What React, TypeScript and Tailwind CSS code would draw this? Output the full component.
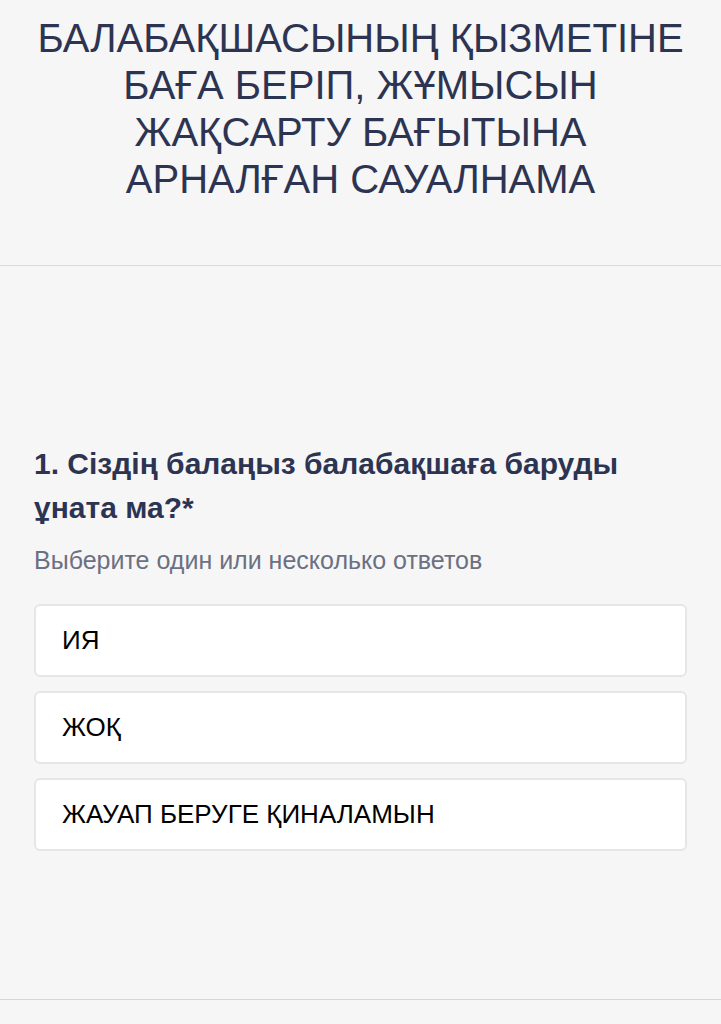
import React from 'react'

const options = ['ИЯ', 'ЖОҚ', 'ЖАУАП БЕРУГЕ ҚИНАЛАМЫН']

export default function App() {
  return (
    <div
      className="min-h-[1024px] w-full bg-[#f6f6f6] text-[#2d3452]"
      style={{ fontFamily: '"Liberation Sans", Arial, sans-serif' }}
    >
      {/* title */}
      <header className="h-[266px] border-b border-[#dadada] px-6 pt-[15px]">
        <h1 className="text-center text-[40px] leading-[47px] font-normal">
          БАЛАБАҚШАСЫНЫҢ ҚЫЗМЕТІНЕ
          <br />
          БАҒА БЕРІП, ЖҰМЫСЫН
          <br />
          ЖАҚСАРТУ БАҒЫТЫНА
          <br />
          АРНАЛҒАН САУАЛНАМА
        </h1>
      </header>

      {/* question */}
      <section className="h-[734px] border-b border-[#d6d6d6] px-[34px] pt-[176px]">
        <div className="text-[30px] leading-[44px] font-semibold pr-10">
          1. Сіздің балаңыз балабақшаға баруды ұната ма?*
        </div>
        <div className="mt-[15px] text-[25px] leading-[30px] text-[#6b7082]">
          Выберите один или несколько ответов
        </div>
        <div className="mt-[29px] flex flex-col gap-[14px]">
          {options.map(o => (
            <div
              key={o}
              className="flex h-[73px] items-center rounded-md border-2 border-[#e6e6e6] bg-white px-[26px] text-[26px] text-black"
            >
              {o}
            </div>
          ))}
        </div>
      </section>
    </div>
  )
}
